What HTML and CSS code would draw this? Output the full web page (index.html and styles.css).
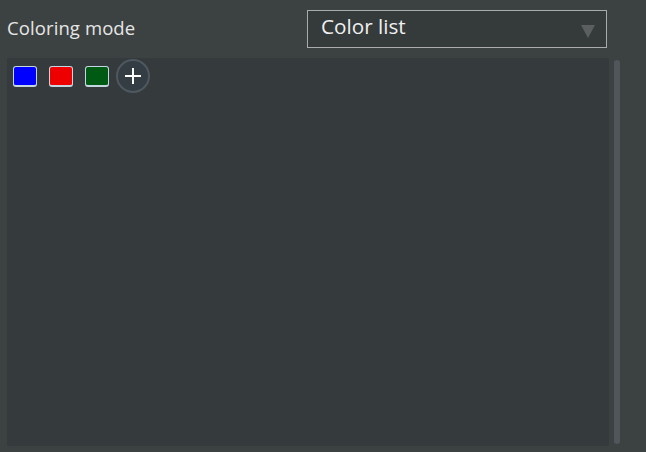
FILE: index.html
```html
<!DOCTYPE html>
<html>
<head>
<meta charset="utf-8">
<link rel="stylesheet" href="styles.css">
</head>
<body>
<div class="page">
  <div class="row">
    <div class="label">Coloring mode</div>
    <div class="select">
      <span class="select-text">Color list</span>
      <span class="arrow"></span>
    </div>
  </div>
  <div class="body">
    <div class="panel">
      <div class="swatches">
        <span class="swatch blue"></span>
        <span class="swatch red"></span>
        <span class="swatch green"></span>
        <span class="add">
          <svg width="18" height="18" viewBox="0 0 18 18"><path d="M9 1V17M1 9H17" stroke="#ffffff" stroke-width="2"/></svg>
        </span>
      </div>
    </div>
    <div class="scrollbar"></div>
  </div>
</div>
</body>
</html>
```
FILE: styles.css
```css
html, body {
  margin: 0;
  padding: 0;
  background: #3c4141;
  width: 646px;
  height: 452px;
  overflow: hidden;
  font-family: "Open Sans", "Noto Sans", sans-serif;
}
.page {
  padding: 10px 0 0 7px;
}
.row {
  display: flex;
  align-items: center;
  height: 38px;
}
.label {
  width: 301px;
  padding-left: 0;
  color: #e6e6e6;
  font-size: 18.5px;
  margin-top: -3px;
  letter-spacing: 0.1px;
}
.select {
  box-sizing: border-box;
  width: 300px;
  height: 38px;
  margin-left: -1px;
  border: 1px solid #a9acab;
  background: #353a3b;
  display: flex;
  align-items: center;
  justify-content: space-between;
  padding: 0 11px 0 13px;
}
.select-text {
  color: #f0f0f0;
  font-size: 20.7px;
  margin-top: -6px;
}
.arrow {
  width: 0;
  height: 0;
  border-left: 7px solid transparent;
  border-right: 7px solid transparent;
  border-top: 13px solid #5b5f5f;
  margin-top: 4px;
}
.body {
  display: flex;
  margin-top: 10px;
  gap: 5px;
}
.panel {
  width: 602px;
  height: 388px;
  background: #353a3c;
}
.swatches {
  display: flex;
  align-items: center;
  padding: 1px 0 0 6px;
  height: 34px;
}
.swatch {
  box-sizing: border-box;
  width: 24px;
  height: 21px;
  border: 1px solid #c4d6e2;
  border-bottom-width: 2px;
  border-radius: 3px;
  margin-right: 12px;
}
.blue { background: #0000ff; }
.red { background: #ee0000; }
.green { background: #005a14; margin-right: 7px; }
.add {
  box-sizing: border-box;
  width: 34px;
  height: 34px;
  border-radius: 50%;
  border: 2px solid #4e585e;
  background: #343c44;
  display: flex;
  align-items: center;
  justify-content: center;
}
.scrollbar {
  width: 6px;
  height: 384px;
  margin-top: 2px;
  background: #50565a;
  border-radius: 3px;
}
```
